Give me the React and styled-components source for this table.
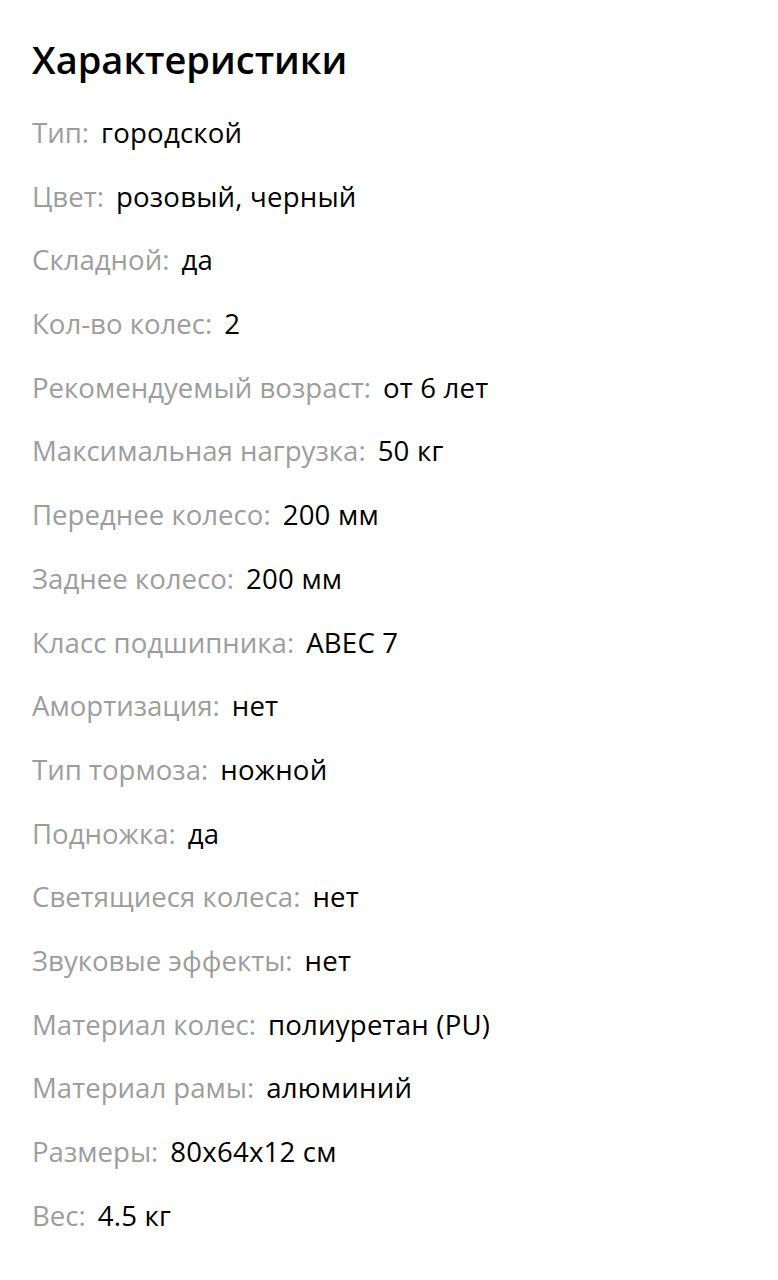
import React from "react";
import styled, { createGlobalStyle } from "styled-components";

const GlobalStyle = createGlobalStyle`
  body {
    margin: 0;
    background: #ffffff;
    font-family: "Open Sans", "Noto Sans", sans-serif;
  }
`;

const Container = styled.div`
  padding: 34px 32px 40px;
  display: flex;
  flex-direction: column;
`;

const Title = styled.h2`
  margin: 0 0 30px;
  font-size: 38px;
  font-weight: 600;
  color: #000;
  line-height: 50px;
`;

const List = styled.div`
  display: flex;
  flex-direction: column;
`;

const Row = styled.div`
  display: flex;
  flex-direction: row;
  align-items: baseline;
  gap: 12px;
  height: 63.7px;
  font-size: 27.6px;
  line-height: 36px;
`;

const Label = styled.span`
  color: #9d9d9d;
`;

const Value = styled.span`
  color: #000;
  letter-spacing: 0.2px;
`;

const specs = [
  ["Тип", "городской"],
  ["Цвет", "розовый, черный"],
  ["Складной", "да"],
  ["Кол-во колес", "2"],
  ["Рекомендуемый возраст", "от 6 лет"],
  ["Максимальная нагрузка", "50 кг"],
  ["Переднее колесо", "200 мм"],
  ["Заднее колесо", "200 мм"],
  ["Класс подшипника", "ABEC 7"],
  ["Амортизация", "нет"],
  ["Тип тормоза", "ножной"],
  ["Подножка", "да"],
  ["Светящиеся колеса", "нет"],
  ["Звуковые эффекты", "нет"],
  ["Материал колес", "полиуретан (PU)"],
  ["Материал рамы", "алюминий"],
  ["Размеры", "80x64x12 см"],
  ["Вес", "4.5 кг"],
];

function App() {
  return (
    <Container>
      <GlobalStyle />
      <Title>Характеристики</Title>
      <List>
        {specs.map(([label, value]) => (
          <Row key={label}>
            <Label>{label}:</Label>
            <Value>{value}</Value>
          </Row>
        ))}
      </List>
    </Container>
  );
}

export default App;
